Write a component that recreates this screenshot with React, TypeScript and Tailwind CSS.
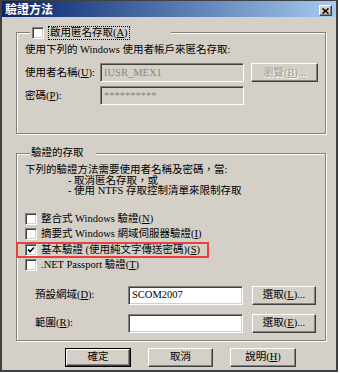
import React from "react";

const etched = "border border-[#808080] shadow-[inset_1px_1px_0_#fff,1px_1px_0_#fff]";
const raised =
    "border border-t-white border-l-white border-r-[#404040] border-b-[#404040] shadow-[inset_-1px_-1px_0_#808080]";
const sunken =
    "border border-t-[#808080] border-l-[#808080] border-r-white border-b-white shadow-[inset_1px_1px_0_#404040,inset_-1px_-1px_0_#d4d0c8]";

function Key({ c }: { c: string }) {
    return (
        <>
            (<u>{c}</u>)
        </>
    );
}

function Check({ checked = false }: { checked?: boolean }) {
    return (
        <span className={`w-[12px] h-[12px] bg-white flex items-center justify-center shrink-0 ${sunken}`}>
            {checked && (
                <svg width="8" height="8" viewBox="0 0 8 8">
                    <path d="M1 3.5 L3 5.5 L7 1.5" stroke="#000" strokeWidth="1.6" fill="none" />
                </svg>
            )}
        </span>
    );
}

function Button({
    children,
    w,
    disabled = false,
    isDefault = false,
}: {
    children: React.ReactNode;
    w: string;
    disabled?: boolean;
    isDefault?: boolean;
}) {
    const inner = (
        <div
            className={`h-full flex items-center justify-center ${raised} ${
                disabled ? "text-[#9a9890] [text-shadow:1px_1px_0_#fff]" : ""
            }`}
        >
            {children}
        </div>
    );
    if (isDefault) {
        return <div className={`${w} h-[19px] border border-black`}>{inner}</div>;
    }
    return <div className={`${w} h-[19px]`}>{inner}</div>;
}

function Field({ value, disabled = false, w }: { value: string; disabled?: boolean; w: string }) {
    return (
        <div
            className={`${w} h-[19px] flex items-center px-[3px] ${sunken} ${
                disabled ? "bg-[#d4d0c8] text-[#8a8880]" : "bg-white text-black"
            }`}
        >
            {value}
        </div>
    );
}

function CheckRow({
    label,
    checked = false,
    flagged = false,
}: {
    label: React.ReactNode;
    checked?: boolean;
    flagged?: boolean;
}) {
    if (flagged) {
        return (
            <div className="h-[16px] w-[193px] -ml-[9px] pl-[7px] flex items-center gap-[4px] border-2 border-[#e8403c]">
                <Check checked={checked} />
                <span className="whitespace-nowrap">{label}</span>
            </div>
        );
    }
    return (
        <div className="h-[15px] flex items-center gap-[4px]">
            <Check checked={checked} />
            <span className="whitespace-nowrap">{label}</span>
        </div>
    );
}

export default function App() {
    return (
        <div className="w-[340px] h-[373px] bg-white font-[family-name:'Liberation_Serif','Noto_Sans_CJK_TC',serif] text-[10.5px] text-black leading-[14px]">
            <div className="w-[338px] h-[372px] bg-[#d4d0c8] border-2 border-t border-[#404040] flex flex-col">
                {/* Title bar */}
                <div className="h-[16px] flex items-start justify-between bg-gradient-to-r from-[#0a246a] to-[#a6caf0] pl-[3px] pr-[4px]">
                    <span className="text-white font-bold text-[12px] leading-[16px] font-[family-name:'Noto_Sans_CJK_TC',sans-serif]">
                        驗證方法
                    </span>
                    <div className={`mt-[4px] w-[13px] h-[11px] bg-[#d4d0c8] flex items-center justify-center ${raised}`}>
                        <svg width="7" height="6" viewBox="0 0 7 6">
                            <path d="M0.5 0.5 L6.5 5.5 M6.5 0.5 L0.5 5.5" stroke="#000" strokeWidth="1.6" />
                        </svg>
                    </div>
                </div>

                {/* Anonymous access */}
                <fieldset className={`ml-[14px] mt-[8px] w-[310px] pl-[8px] pb-[28px] ${etched}`}>
                    <legend className="ml-[5px] w-[141px] h-[15px] bg-[#d4d0c8] flex items-center">
                        <span className="ml-[2px]">
                            <Check />
                        </span>
                        <span className="ml-[4px] px-[1px] border border-dotted border-black leading-[12px] whitespace-nowrap">
                            啟用匿名存取<Key c="A" />
                        </span>
                    </legend>
                    <div className="mt-[3px] h-[14px] whitespace-nowrap">使用下列的 Windows 使用者帳戶來匿名存取:</div>
                    <div className="mt-[6px] flex items-center">
                        <span className="w-[75px] whitespace-nowrap">
                            使用者名稱<Key c="U" />:
                        </span>
                        <Field value="IUSR_MEX1" disabled w="w-[144px]" />
                        <div className="ml-[7px]">
                            <Button w="w-[67px]" disabled>
                                瀏覽<Key c="B" />...
                            </Button>
                        </div>
                    </div>
                    <div className="mt-[4px] flex items-center">
                        <span className="w-[75px] whitespace-nowrap">
                            密碼<Key c="P" />:
                        </span>
                        <Field value="**********" disabled w="w-[144px]" />
                    </div>
                </fieldset>

                {/* Authenticated access */}
                <fieldset className={`ml-[14px] mt-[12px] w-[310px] pl-[8px] pb-[7px] ${etched}`}>
                    <legend className="ml-[5px] w-[66px] h-[14px] bg-[#d4d0c8] px-[1px] whitespace-nowrap">驗證的存取</legend>
                    <div className="mt-[5px] leading-[10.5px] whitespace-nowrap">
                        <div>下列的驗證方法需要使用者名稱及密碼，當:</div>
                        <div className="pl-[43px]">- 取消匿名存取，或</div>
                        <div className="pl-[43px]">- 使用 NTFS 存取控制清單來限制存取</div>
                    </div>
                    <div className="mt-[15px] flex flex-col">
                        <CheckRow label={<>整合式 Windows 驗證<Key c="N" /></>} />
                        <CheckRow label={<>摘要式 Windows 網域伺服器驗證<Key c="I" /></>} />
                        <CheckRow checked flagged label={<>基本驗證 (使用純文字傳送密碼)<Key c="S" /></>} />
                        <CheckRow label={<>.NET Passport 驗證<Key c="T" /></>} />
                    </div>
                    <div className="mt-[13px] flex items-center">
                        <span className="ml-[10px] w-[93px] whitespace-nowrap">
                            預設網域<Key c="D" />:
                        </span>
                        <Field value="SCOM2007" w="w-[115px]" />
                        <div className="ml-[9px]">
                            <Button w="w-[64px]">
                                選取<Key c="L" />...
                            </Button>
                        </div>
                    </div>
                    <div className="mt-[9px] flex items-center">
                        <span className="ml-[10px] w-[93px] whitespace-nowrap">
                            範圍<Key c="R" />:
                        </span>
                        <Field value="" w="w-[115px]" />
                        <div className="ml-[9px]">
                            <Button w="w-[64px]">
                                選取<Key c="E" />...
                            </Button>
                        </div>
                    </div>
                </fieldset>

                {/* Dialog buttons */}
                <div className="mt-[7px] ml-[63px] flex gap-[17px]">
                    <Button w="w-[66px]" isDefault>
                        確定
                    </Button>
                    <Button w="w-[65px]">取消</Button>
                    <Button w="w-[66px]">
                        說明<Key c="H" />
                    </Button>
                </div>
            </div>
        </div>
    );
}
